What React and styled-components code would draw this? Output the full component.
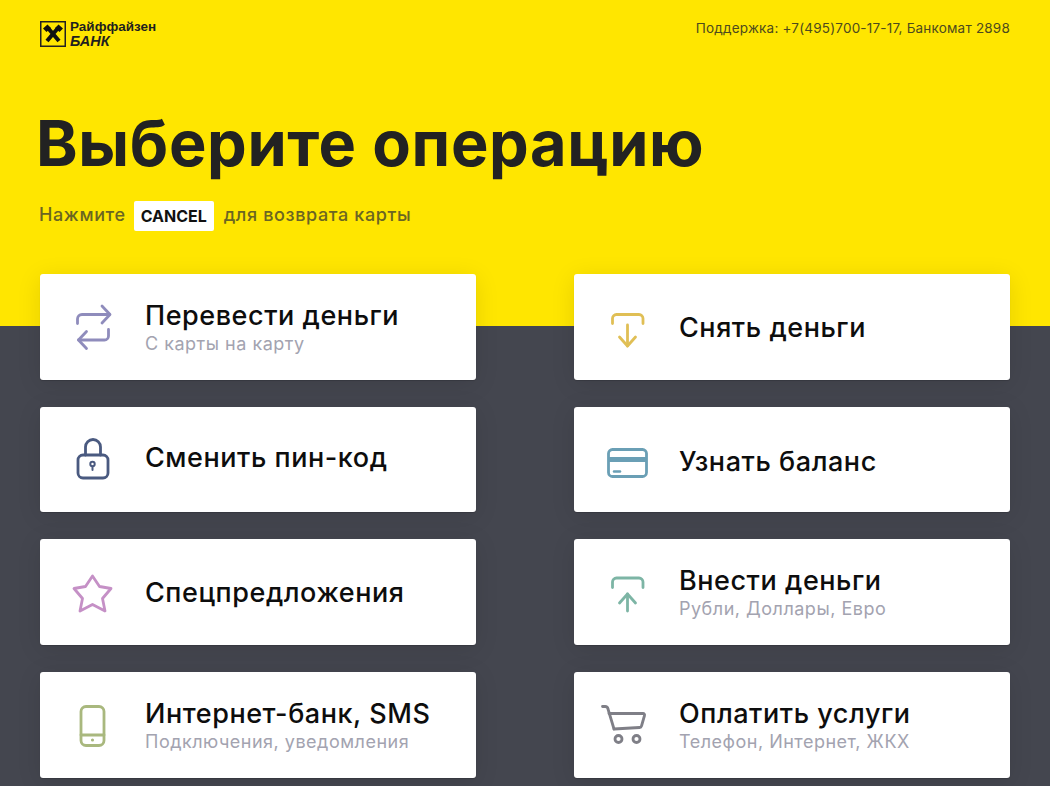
import React from 'react';
import styled, { createGlobalStyle } from 'styled-components';

const GlobalStyle = createGlobalStyle`
  html, body {
    margin: 0;
    padding: 0;
    background: #fff;
  }
  * {
    box-sizing: border-box;
  }
`;

const Page = styled.div`
  width: 1050px;
  height: 786px;
  padding: 0 40px;
  overflow: hidden;
  font-family: Inter, "Noto Sans", sans-serif;
  background: linear-gradient(#ffe600 326px, #44464f 326px);
`;

const Top = styled.header`
  display: flex;
  justify-content: space-between;
  align-items: flex-start;
  height: 109px;
  padding-top: 19px;
`;

const Logo = styled.div`
  display: flex;
  align-items: center;
  gap: 4px;
  height: 30px;
`;

const LogoText = styled.div`
  font-family: "Liberation Sans", Arial, sans-serif;
  font-weight: 700;
  font-size: 13.5px;
  line-height: 14px;
  color: #1f1f1f;
`;

const LogoSub = styled.div`
  font-style: italic;
  font-size: 14.5px;
`;

const Support = styled.div`
  font-size: 13.5px;
  line-height: 18px;
  letter-spacing: 0.2px;
  color: #4d4a1e;
`;

const Title = styled.h1`
  margin: 0 0 0 -4px;
  font-size: 63px;
  line-height: 68px;
  letter-spacing: 0.65px;
  font-weight: 700;
  color: #222;
`;

const Hint = styled.div`
  display: flex;
  align-items: center;
  gap: 10px;
  height: 32px;
  margin: 21px 0 44px -1px;
  font-size: 18px;
  font-weight: 500;
  letter-spacing: 0.62px;
  color: #6b6522;
`;

const Key = styled.span`
  display: flex;
  align-items: center;
  justify-content: center;
  width: 80px;
  height: 30px;
  margin: 3px 0 0 -2px;
  background: #fff;
  border-radius: 2px;
  font-size: 16px;
  font-weight: 700;
  letter-spacing: 0;
  color: #111;
`;

const Grid = styled.div`
  display: grid;
  grid-template-columns: 436px 436px;
  grid-auto-rows: 105.67px;
  column-gap: 98px;
  row-gap: 27px;
`;

const Card = styled.div`
  display: flex;
  align-items: center;
  background: #fff;
  border-radius: 3px;
  box-shadow: 0 4px 24px rgba(0, 0, 0, 0.1), 0 1px 1px rgba(0, 0, 0, 0.15);
`;

const IconSlot = styled.div`
  flex: none;
  display: flex;
  justify-content: center;
  width: 105px;
`;

const Glyph = styled.svg.attrs({ viewBox: '0 0 60 60', fill: 'none' })`
  display: block;
  width: 60px;
  height: 60px;
  stroke: ${(p) => p.$color};
  stroke-width: 2.8;
  stroke-linecap: round;
  stroke-linejoin: round;
`;

const Text = styled.div`
  margin-top: ${(p) => p.$drop || 0}px;
`;

const Name = styled.div`
  font-size: 27px;
  line-height: 32px;
  letter-spacing: 0.55px;
  font-weight: 500;
  color: #0d0d0d;
`;

const Note = styled.div`
  font-size: 18px;
  line-height: 24px;
  letter-spacing: 0.5px;
  color: #a3a3b0;
`;

const TransferIcon = () => (
  <Glyph $color="#8f8cbc">
    <path d="M14.500 26.500V22a4.500 4.500 0 0 1 4.500-4.500H46.500" />
    <path d="M39 9l8 8.500-8 8.500" />
    <path d="M45.500 32.500V39a4 4 0 0 1-4 4H15.500" />
    <path d="M23.500 34.500l-8 8.500 8 8.500" />
  </Glyph>
);

const LockIcon = () => (
  <Glyph $color="#4a5a80">
    <rect x="15" y="26" width="30" height="23" rx="5" />
    <path d="M22.500 26v-8a7.500 7.500 0 0 1 15 0v8" />
    <circle cx="29.500" cy="35" r="2.200" strokeWidth="2" />
    <path d="M29.500 37.500V41" strokeWidth="2" />
  </Glyph>
);

const StarIcon = () => (
  <Glyph $color="#c590c6">
    <path d="M29.500 14l7 10.500 11.500 2-8.500 10 2.500 12.500-12.500-6.500-12.500 6.500 2.500-12.500-8.500-10 11.500-2z" />
  </Glyph>
);

const PhoneIcon = () => (
  <Glyph $color="#a9b87e">
    <rect x="18" y="11.500" width="23" height="39" rx="5" />
    <path d="M18 40h23" />
    <circle cx="29.500" cy="45" r="0.800" strokeWidth="1.500" />
  </Glyph>
);

const DownIcon = () => (
  <Glyph $color="#e0bf55">
    <path d="M15.500 26.500V21.500a4 4 0 0 1 4-4H42a4 4 0 0 1 4 4v5" />
    <path d="M30.500 28v21" />
    <path d="M22.500 40l8 9 8-9" />
  </Glyph>
);

const BalanceIcon = () => (
  <Glyph $color="#6a9fb5">
    <rect x="11.500" y="20.500" width="38" height="27" rx="4" />
    <path d="M12 30.500h37" strokeWidth="5" strokeLinecap="butt" />
    <path d="M17 42.500h6" strokeWidth="2.500" />
  </Glyph>
);

const UpIcon = () => (
  <Glyph $color="#7db5a5">
    <path d="M15.500 25.500V20a4 4 0 0 1 4-4H42a4 4 0 0 1 4 4v5.500" />
    <path d="M30.500 49V32" />
    <path d="M22.500 41l8-9 8 9" />
  </Glyph>
);

const CartIcon = () => (
  <Glyph $color="#7f7f87">
    <path d="M5.500 11.500H8a3 3 0 0 1 3 2.500L17 34" />
    <path d="M12 18.500h34a1.500 1.500 0 0 1 1.500 2L44.500 31a2 2 0 0 1-2 1.500L17 34" />
    <circle cx="21.500" cy="44" r="3.500" />
    <circle cx="39.500" cy="44" r="3.500" />
  </Glyph>
);

const BankMark = () => (
  <svg width="26" height="26" viewBox="0 0 26 26" fill="none">
    <rect x="0.750" y="0.750" width="24.500" height="24.500" stroke="#222" strokeWidth="1.500" />
    <path d="M7 20L18 7M19 20L8 7" stroke="#111" strokeWidth="4" />
    <path d="M3 7.500l4.500-4 3.500 3.500-4.500 4zM23 7.500l-4.500-4-3.500 3.500 4.500 4z" fill="#111" />
  </svg>
);

const items = [
  { Icon: TransferIcon, name: 'Перевести деньги', note: 'С карты на карту', drop: 2 },
  { Icon: DownIcon, name: 'Снять деньги', drop: 3 },
  { Icon: LockIcon, name: 'Сменить пин-код', drop: -2 },
  { Icon: BalanceIcon, name: 'Узнать баланс', drop: 6 },
  { Icon: StarIcon, name: 'Спецпредложения', drop: 2 },
  { Icon: UpIcon, name: 'Внести деньги', note: 'Рубли, Доллары, Евро', drop: 2 },
  { Icon: PhoneIcon, name: 'Интернет-банк, SMS', note: 'Подключения, уведомления', drop: 3 },
  { Icon: CartIcon, name: 'Оплатить услуги', note: 'Телефон, Интернет, ЖКХ', drop: 3 },
];

export default function App() {
  return (
    <Page>
      <GlobalStyle />
      <Top>
        <Logo>
          <BankMark />
          <LogoText>
            Райффайзен
            <LogoSub>БАНК</LogoSub>
          </LogoText>
        </Logo>
        <Support>Поддержка: +7(495)700-17-17, Банкомат 2898</Support>
      </Top>
      <Title>Выберите операцию</Title>
      <Hint>
        Нажмите <Key>CANCEL</Key> для возврата карты
      </Hint>
      <Grid>
        {items.map(({ Icon, name, note, drop }) => (
          <Card key={name}>
            <IconSlot>
              <Icon />
            </IconSlot>
            <Text $drop={drop}>
              <Name>{name}</Name>
              {note && <Note>{note}</Note>}
            </Text>
          </Card>
        ))}
      </Grid>
    </Page>
  );
}
